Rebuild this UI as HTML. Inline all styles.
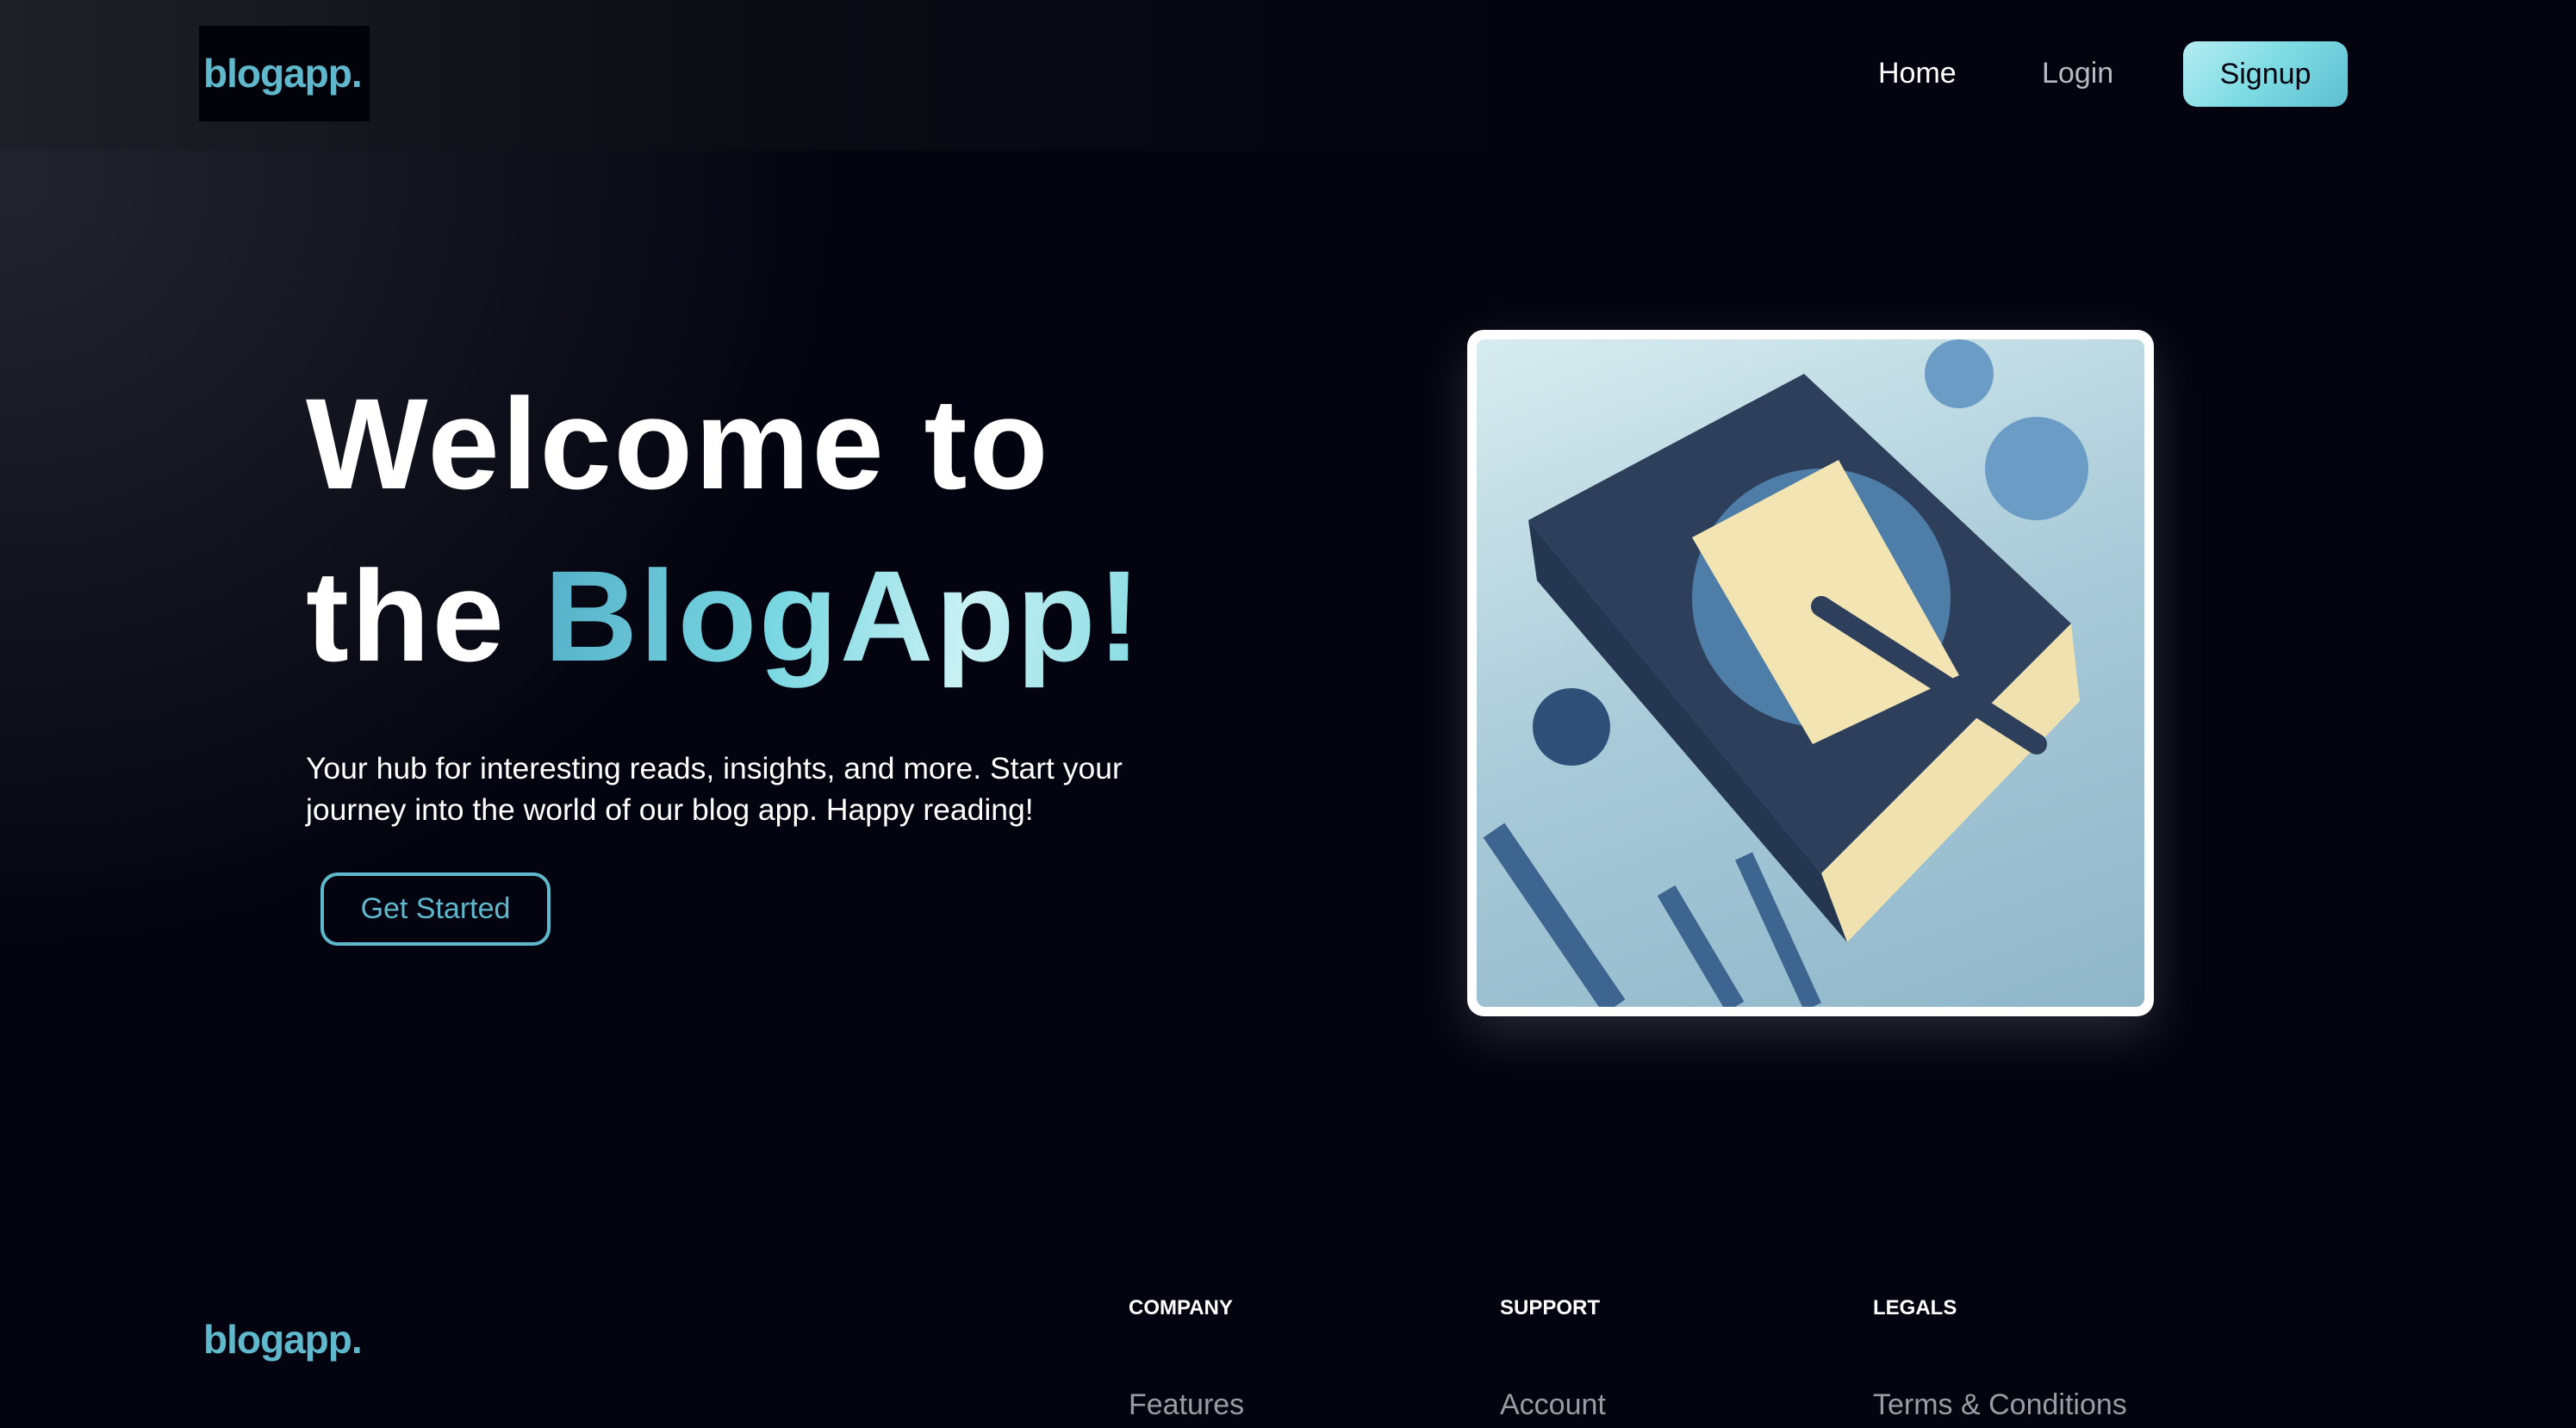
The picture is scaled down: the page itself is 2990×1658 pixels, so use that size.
<!DOCTYPE html>
<html><head><meta charset="utf-8"><style>
*{margin:0;padding:0;box-sizing:border-box}
html,body{width:2990px;height:1658px;overflow:hidden}
body{background:#03040f;font-family:"Liberation Sans",sans-serif;position:relative;color:#fff}
.bg{position:absolute;inset:0;background:radial-gradient(ellipse 1400px 1300px at 0px 200px,rgba(40,43,52,0.85),rgba(3,4,15,0) 70%)}
.nav{position:absolute;left:0;top:0;width:2990px;height:175px;background:#03040f}
.navg{position:absolute;left:0;top:0;width:2990px;height:175px;background:linear-gradient(90deg,#1e2028 0%,#0a0b13 30%,#03040f 60%)}
.logo{position:absolute;left:231px;top:30px;width:198px;height:111px;background:#02030a;color:#5fb8cc;font-weight:bold;font-size:46px;letter-spacing:-1px;line-height:111px;padding-left:5px}
.nl{position:absolute;top:62px;font-size:34px;line-height:46px}
.btn{position:absolute;left:2534px;top:48px;width:191px;height:76px;border-radius:16px;background:linear-gradient(135deg,#b6ecf2,#7ddbe3 50%,#5fbfd0);color:#03040f;font-size:34px;text-align:center;line-height:76px}
h1{position:absolute;left:355px;font-size:150px;font-weight:bold;letter-spacing:2.5px;white-space:nowrap;line-height:1}
.grad{background:linear-gradient(100deg,#55b0c8 0%,#7ad8e2 40%,#c9f1f4 70%,#86dbe3 100%);-webkit-background-clip:text;background-clip:text;color:transparent}
p.d{position:absolute;left:355px;top:868px;font-size:35.5px;line-height:48px;white-space:nowrap}
.gs{position:absolute;left:372px;top:1013px;width:267px;height:85px;border:4px solid #5fb8cc;border-radius:20px;color:#5fb8cc;font-size:34px;text-align:center;line-height:77px}
.card{position:absolute;left:1703px;top:383px;width:797px;height:797px;background:#fff;border-radius:19px;padding:11px;box-shadow:0 20px 60px rgba(200,210,230,0.18)}
.img{width:100%;height:100%;border-radius:10px;background:linear-gradient(160deg,#d7ecef 0%,#a8cad8 50%,#8fb6c9 100%);position:relative;overflow:hidden}
.fh{position:absolute;top:1505px;font-size:24px;font-weight:bold;color:#fff}
.fl{position:absolute;top:1612px;font-size:34px;color:#9a9ca3}
</style></head><body>
<div class="bg"></div>
<div class="nav"><div class="navg"></div></div>
<div class="logo">blogapp.</div>
<div class="nl" style="left:2180px;color:#fff">Home</div>
<div class="nl" style="left:2370px;color:#b8bac0">Login</div>
<div class="btn">Signup</div>
<h1 style="top:440px">Welcome to</h1>
<h1 style="top:640px">the <span class="grad">BlogApp!</span></h1>
<p class="d">Your hub for interesting reads, insights, and more. Start your<br>journey into the world of our blog app. Happy reading!</p>
<div class="gs">Get Started</div>
<div class="card"><div class="img">
<svg width="775" height="775" viewBox="0 0 775 775">
<polygon points="60,210 380,40 690,330 400,620" fill="#2d3f5a"/>
<polygon points="400,620 690,330 700,420 430,700" fill="#efe2b0"/>
<polygon points="60,210 400,620 430,700 70,280" fill="#243650"/>
<circle cx="400" cy="300" r="150" fill="#4e7ea8"/>
<polygon points="250,230 420,140 560,390 390,470" fill="#f3e4b3"/>
<line x1="400" y1="310" x2="650" y2="470" stroke="#2d3f5a" stroke-width="24" stroke-linecap="round"/>
<circle cx="560" cy="40" r="40" fill="#6b9cc6"/><circle cx="650" cy="150" r="60" fill="#6b9cc6"/>
<circle cx="110" cy="450" r="45" fill="#2d4f78"/>
<line x1="20" y1="570" x2="160" y2="775" stroke="#3e6590" stroke-width="30"/>
<line x1="220" y1="640" x2="300" y2="775" stroke="#3e6590" stroke-width="24"/>
<line x1="310" y1="600" x2="390" y2="775" stroke="#3e6590" stroke-width="22"/>
</svg></div></div>
<div class="logo" style="left:231px;top:1500px;background:none;line-height:110px">blogapp.</div>
<div class="fh" style="left:1310px">COMPANY</div>
<div class="fh" style="left:1741px">SUPPORT</div>
<div class="fh" style="left:2174px">LEGALS</div>
<div class="fl" style="left:1310px">Features</div>
<div class="fl" style="left:1741px">Account</div>
<div class="fl" style="left:2174px">Terms &amp; Conditions</div>
</body></html>
